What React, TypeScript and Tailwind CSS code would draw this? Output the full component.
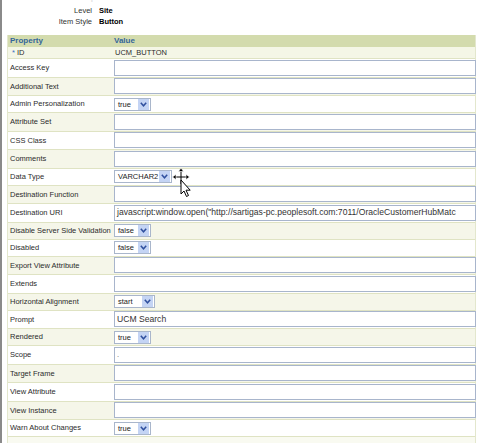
import React from 'react';

type Kind = 'input' | 'select';

type Row = {
  label: string;
  kind: Kind;
  value?: string;
  selectWidth?: number;
  big?: boolean;
};

const ROWS: Row[] = [
  { label: 'Access Key', kind: 'input' },
  { label: 'Additional Text', kind: 'input' },
  { label: 'Admin Personalization', kind: 'select', value: 'true', selectWidth: 37 },
  { label: 'Attribute Set', kind: 'input' },
  { label: 'CSS Class', kind: 'input' },
  { label: 'Comments', kind: 'input' },
  { label: 'Data Type', kind: 'select', value: 'VARCHAR2', selectWidth: 58 },
  { label: 'Destination Function', kind: 'input' },
  {
    label: 'Destination URI',
    kind: 'input',
    value: 'javascript:window.open("http://sartigas-pc.peoplesoft.com:7011/OracleCustomerHubMatc',
    big: true,
  },
  { label: 'Disable Server Side Validation', kind: 'select', value: 'false', selectWidth: 37 },
  { label: 'Disabled', kind: 'select', value: 'false', selectWidth: 37 },
  { label: 'Export View Attribute', kind: 'input' },
  { label: 'Extends', kind: 'input' },
  { label: 'Horizontal Alignment', kind: 'select', value: 'start', selectWidth: 41 },
  { label: 'Prompt', kind: 'input', value: 'UCM Search', big: true },
  { label: 'Rendered', kind: 'select', value: 'true', selectWidth: 37 },
  { label: 'Scope', kind: 'input', value: '.' },
  { label: 'Target Frame', kind: 'input' },
  { label: 'View Attribute', kind: 'input' },
  { label: 'View Instance', kind: 'input' },
  { label: 'Warn About Changes', kind: 'select', value: 'true', selectWidth: 37 },
];

function Chevron() {
  return (
    <svg width="7" height="5" viewBox="0 0 7 5" aria-hidden="true">
      <path d="M0.8 0.8 L3.5 3.8 L6.2 0.8" fill="none" stroke="#2f4f9e" strokeWidth="1.5" />
    </svg>
  );
}

function FakeSelect({ value, width }: { value: string; width: number }) {
  return (
    <div
      className="flex h-[13px] items-stretch border border-[#a9b6cb] bg-white"
      style={{ width }}
    >
      <span className="flex-1 truncate pl-[3px] leading-[11px] text-[7.5px] text-[#222]">
        {value}
      </span>
      <span className="mr-[1px] flex w-[11px] items-center justify-center bg-[#c4d4f4]">
        <Chevron />
      </span>
    </div>
  );
}

function FakeInput({ value, big }: { value?: string; big?: boolean }) {
  return (
    <div className="flex h-[16px] w-[362px] items-center overflow-hidden whitespace-nowrap border border-[#a8b5cc] bg-white pl-[2px]">
      <span
        className={
          big ? 'text-[8.6px] text-[#333]' : 'text-[7.5px] text-[#555]'
        }
      >
        {value}
      </span>
    </div>
  );
}

function MoveCursor() {
  return (
    <svg
      className="pointer-events-none absolute left-[168px] top-[166px]"
      width="26"
      height="32"
      viewBox="0 0 26 32"
      aria-hidden="true"
    >
      {/* four-way move arrows */}
      <g stroke="#fff" strokeWidth="3" strokeLinecap="round">
        <line x1="11" y1="4" x2="11" y2="18" />
        <line x1="4" y1="11" x2="18" y2="11" />
      </g>
      <g stroke="#000" strokeWidth="1">
        <line x1="11" y1="4" x2="11" y2="18" />
        <line x1="4" y1="11" x2="18" y2="11" />
      </g>
      <g fill="#000" stroke="#fff" strokeWidth="0.6">
        <polygon points="11,2 8.5,5.5 13.5,5.5" />
        <polygon points="2.5,11 6,8.5 6,13.5" />
        <polygon points="19.5,11 16,8.5 16,13.5" />
      </g>
      {/* arrow pointer */}
      <polygon
        points="11,14 11,28 14,25 16.5,30.5 18.5,29.5 16,24.2 20.2,24.2"
        fill="#fff"
        stroke="#000"
        strokeWidth="1"
        strokeLinejoin="round"
      />
    </svg>
  );
}

export default function App() {
  return (
    <div
      className="relative h-[443px] w-[477px] overflow-hidden border-l-2 border-[#8a8a8a] bg-white text-[#2b2b2b]"
      style={{ fontFamily: '"Liberation Sans", Arial, sans-serif' }}
    >
      {/* faint bottom edge of the section above, cut off by the screenshot */}
      <div className="h-[4px] overflow-hidden pl-[14px]">
        <div className="-mt-[8px] text-[8px] font-bold text-[#e2e2e2]">Personalization Properties</div>
      </div>

      <div className="mt-[1px] grid grid-cols-[90px_1fr] gap-x-[7px] gap-y-0 text-[7.5px] leading-[11px]">
        <span className="text-right text-[#333]">Level</span>
        <span className="font-bold text-black">Site</span>
        <span className="text-right text-[#333]">Item Style</span>
        <span className="font-bold text-black">Button</span>
      </div>

      <div className="ml-[5px] mt-[8px] w-[469px] border-x border-[#e3e7cd]">
        <div className="grid h-[12px] grid-cols-[105px_1fr] items-center bg-[#d3dbad] text-[8px] font-bold text-[#33669a]">
          <span className="pl-[2px]">Property</span>
          <span className="pl-[1px]">Value</span>
        </div>
        <div className="grid h-[12px] grid-cols-[105px_1fr] items-center border-b border-[#dfe3c3] bg-[#f4f6e6] text-[7.5px]">
          <span className="pl-[4px]">
            <span className="text-[#3a6fc4]">*</span> ID
          </span>
          <span className="pl-[2px]">UCM_BUTTON</span>
        </div>
        {ROWS.map((r, i) => (
          <div
            key={r.label}
            className={[
              'grid grid-cols-[105px_1fr] items-center border-b border-[#dfe3c3]',
              r.kind === 'input' ? 'h-[18.5px]' : 'h-[17px]',
              i % 2 === 1 ? 'bg-[#f5f6e9]' : 'bg-white',
            ].join(' ')}
          >
            <span className="whitespace-nowrap pl-[2px] text-[7.5px]">{r.label}</span>
            <div className="pl-[1px]">
              {r.kind === 'input' ? (
                <FakeInput value={r.value} big={r.big} />
              ) : (
                <FakeSelect value={r.value ?? ''} width={r.selectWidth ?? 37} />
              )}
            </div>
          </div>
        ))}
        <div className="h-[8px] bg-[#f9faf1]" />
      </div>

      <MoveCursor />
    </div>
  );
}
